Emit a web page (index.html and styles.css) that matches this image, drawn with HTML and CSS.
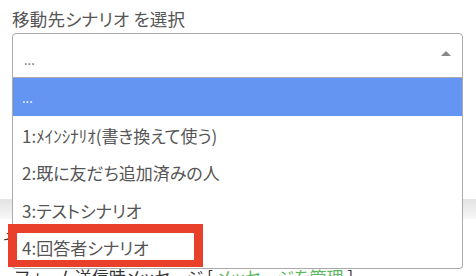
FILE: index.html
```html
<!DOCTYPE html>
<html lang="ja">
<head>
  <meta charset="UTF-8">
  <meta name="viewport" content="width=device-width, initial-scale=1.0">
  <title>移動先シナリオ</title>
  <link rel="stylesheet" href="styles.css">
</head>
<body>

<div class="page">
  <div class="field">
    <label class="label">移動先シナリオ を選択</label>
    <div class="select">
      <span class="select-value">...</span>
      <span class="arrow"></span>
    </div>

    <!-- open dropdown list -->
    <ul class="options">
      <li class="option active">...</li>
      <li class="option">1:ﾒｲﾝｼﾅﾘｵ(書き換えて使う)</li>
      <li class="option">2:既に友だち追加済みの人</li>
      <li class="option">3:テストシナリオ</li>
      <li class="option">4:回答者シナリオ</li>
    </ul>
    <div class="mark"></div>
  </div>

  <div class="band"></div>
  <p class="row">その他の設定</p>
  <p class="row row-msg">フォーム送信時メッセージ [ <span class="link">メッセージを管理</span> ]</p>
</div>

</body>
</html>
```

FILE: styles.css
```css
body {
  font-family: "Noto Sans CJK JP", "Noto Sans", sans-serif;
  font-feature-settings: "palt";
  background-color: #fff;
  color: #555;
  margin: 0;
  padding: 0;
}
.page {
  padding: 6px 0 0 0;
}
.field {
  position: relative;
  padding: 0 13px 0 12px;
}
.label {
  display: block;
  font-size: 17.5px;
  line-height: 26px;
  letter-spacing: 0.2px;
  color: #555;
}
.select {
  margin-top: 1px;
  height: 43px;
  border: 1px solid #aaa;
  border-radius: 4px 4px 0 0;
  display: flex;
  align-items: center;
  justify-content: space-between;
  padding: 0 11px 0 11px;
}
.select-value {
  font-size: 13px;
  color: #666;
  margin-top: 8px;
}
.arrow {
  width: 0;
  height: 0;
  border-left: 5px solid transparent;
  border-right: 5px solid transparent;
  border-bottom: 5px solid #888;
  margin-top: -5px;
}
.options {
  position: absolute;
  top: 72px;
  left: 12px;
  width: 449px;
  margin: 0;
  padding: 0 0 2px 0;
  list-style: none;
  background-color: #fff;
  border: 1px solid #aaa;
  border-top: none;
  border-radius: 0 0 4px 4px;
  z-index: 2;
}
.option {
  height: 37.5px;
  line-height: 39px;
  padding-left: 9px;
  font-size: 17px;
  color: #555;
}
.option.active {
  background-color: #6595f2;
  color: #fff;
  font-size: 13px;
}
.mark {
  position: absolute;
  top: 218px;
  left: 8px;
  width: 177px;
  height: 27px;
  border: 9px solid #e8402a;
  border-bottom-width: 7px;
  z-index: 3;
}
.band {
  margin-top: 121px;
  height: 20px;
  background: linear-gradient(to bottom, #e3e3e3, #f7f7f7);
}
.row {
  margin: 8px 0 0 3px;
  font-size: 17px;
  line-height: 24px;
  color: #333;
}
.row-msg {
  margin: 14px 0 0 15px;
}
.link {
  color: #5cb85c;
}
```
